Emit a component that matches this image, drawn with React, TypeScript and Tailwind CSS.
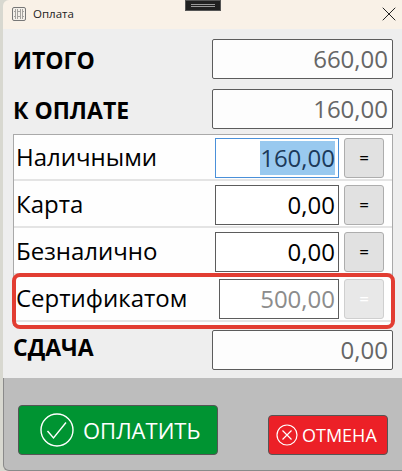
import React from 'react';
import { X } from 'lucide-react';

const font = "font-['Open_Sans','Noto_Sans',sans-serif]";

const TotalRow = ({ label, value, className, labelClass }: { label: string; value: string; className: string; labelClass: string }) => (
  <div className={`flex items-center justify-between pl-[10px] pr-[9px] ${className}`}>
    <span className={`text-[23px] leading-none font-bold text-black ${labelClass}`}>{label}</span>
    <div className="w-[181px] h-[40px] bg-[#fdfdfd] border border-[#5c5c5c] rounded-[2px] flex items-center justify-end pr-[4px] text-[24px] text-[#666666]">
      {value}
    </div>
  </div>
);

const PayRow = ({ label, value, selected, disabled }: { label: string; value: string; selected?: boolean; disabled?: boolean }) => (
  <div className="flex items-center h-[43px] mb-[4px] pb-[1px] border-b-2 border-[#e4e4e4] pl-[2px] pr-[8px] bg-[#fefefe]">
    <span className="flex-1 text-[24px] leading-none text-black -translate-y-[1px]">{label}</span>
    <div
      className={`h-[40px] border flex items-center justify-end pr-[3px] text-[24px] bg-white ${
        disabled ? 'w-[120px] border-[#5c5c5c] text-[#8c8c8c]' : selected ? 'w-[124px] border-[#4a90d9] text-[#1c3a5a]' : 'w-[124px] border-[#5c5c5c] text-black'
      }`}
    >
      {selected ? <span className="bg-[#99c9ef] h-[34px] flex items-center">{value}</span> : value}
    </div>
    <div
      className={`ml-[5px] w-[40px] h-[40px] rounded-[3px] border flex items-center justify-center text-[17px] ${
        disabled ? 'bg-[#e8e8e8] border-[#cfcfcf] text-white' : 'bg-[#e1e1e1] border-[#adadad] text-black'
      }`}
    >
      =
    </div>
  </div>
);

export default function App() {
  return (
    <div className={`relative w-[402px] h-[471px] overflow-hidden bg-[#d8d8d0] pl-[3px] ${font}`}>
      <div className="h-full flex flex-col rounded-tl-[6px] overflow-hidden">
        {/* title bar */}
        <div className="h-[29px] shrink-0 bg-[#f9f1e7] flex items-center pl-[9px] pr-[1px] pb-[1px]">
          <svg width="14" height="14" viewBox="0 0 14 14" className="shrink-0">
            <rect x="0.5" y="0.5" width="13" height="13" rx="1.5" fill="#f4f0ea" stroke="#777" />
            <path d="M3 3h3v3H3zM8 3h3v3H8zM3 8h3v3H3zM8 8h3v3H8z" fill="none" stroke="#555" strokeWidth="1" strokeDasharray="1 1" />
          </svg>
          <span className="ml-[7px] text-[11.5px] text-[#222222]">Оплата</span>
          <X className="ml-auto" size={24} strokeWidth={1} color="#222" />
        </div>

        {/* body */}
        <div className="h-[349px] shrink-0 bg-[#eeeeee] flex flex-col">
          <TotalRow label="ИТОГО" value="660,00" className="mt-[10px]" labelClass="translate-y-[1px]" />
          <TotalRow label="К ОПЛАТЕ" value="160,00" className="mt-[10px]" labelClass="translate-y-[1px]" />
          <div className="mt-[5px] ml-[10px] mr-[9px] border-x border-t border-[#a9a9a9] pt-[3px] bg-[#fefefe]">
            <PayRow label="Наличными" value="160,00" selected />
            <PayRow label="Карта" value="0,00" />
            <PayRow label="Безналично" value="0,00" />
            <PayRow label="Сертификатом" value="500,00" disabled />
          </div>
          <TotalRow label="СДАЧА" value="0,00" className="mt-[4px]" labelClass="-translate-y-[3px]" />
        </div>

        {/* footer */}
        <div className="flex-1 bg-[#bdbdbd] flex items-end justify-between pl-[14px] pr-[14px] pb-[15px] rounded-bl-[6px] border-l border-b border-[#8a8a8a]">
          <button className="w-[200px] h-[50px] rounded-[4px] bg-[#009432] border border-[#555555] flex items-center pl-[21px] text-white text-[22px]">
            <svg width="34" height="34" viewBox="0 0 34 34" fill="none" stroke="white" className="shrink-0">
              <circle cx="17" cy="17" r="16" strokeWidth="1.4" />
              <path d="M7.5 18l6 7L26 9.5" strokeWidth="1.4" />
            </svg>
            <span className="ml-[9px]">ОПЛАТИТЬ</span>
          </button>
          <button className="w-[120px] h-[40px] rounded-[4px] bg-[#ec2027] border border-[#555555] flex items-center pl-[7px] text-white text-[18px]">
            <svg width="22" height="22" viewBox="0 0 22 22" fill="none" stroke="white" className="shrink-0">
              <circle cx="11" cy="11" r="10" strokeWidth="1.2" />
              <path d="M6.5 6.5l9 9M15.5 6.5l-9 9" strokeWidth="1.2" />
            </svg>
            <span className="ml-[4px]">ОТМЕНА</span>
          </button>
        </div>
      </div>

      {/* notch on top of the window */}
      <div className="absolute left-[185px] top-0 w-[36px] h-[11px] bg-[#202020] border border-[#555555] flex flex-col items-center justify-center gap-[1px]">
        <div className="w-[24px] h-px bg-[#999999]" />
        <div className="w-[24px] h-px bg-[#999999]" />
      </div>

      {/* red annotation */}
      <div className="absolute left-[12px] top-[273px] w-[383px] h-[56px] border-[4px] border-[#e23d32] rounded-[8px]" />
    </div>
  );
}
